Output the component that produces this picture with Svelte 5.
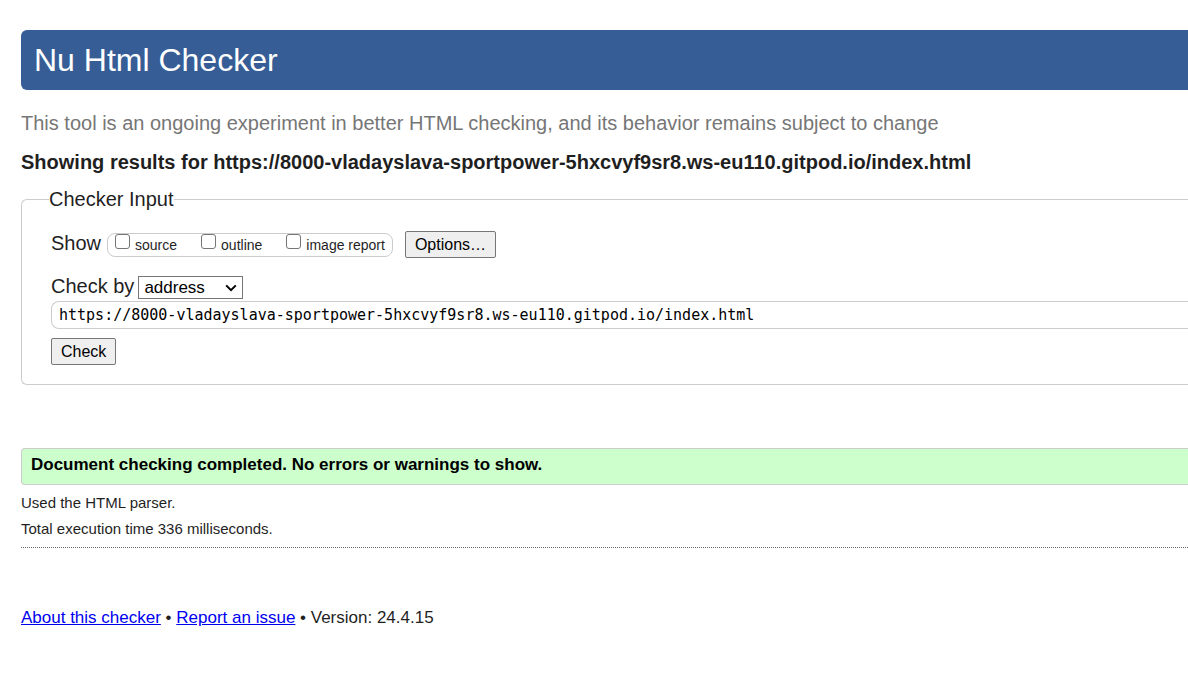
<script>
  const version = '24.4.15';
  let address = $state('https://8000-vladayslava-sportpower-5hxcvyf9sr8.ws-eu110.gitpod.io/index.html');
  const target = 'https://8000-vladayslava-sportpower-5hxcvyf9sr8.ws-eu110.gitpod.io/index.html';
  let method = $state('address');
  const reports = ['source', 'outline', 'image report'];
</script>

<div class="page">
  <header><h1>Nu Html Checker</h1></header>
  <main>
    <p class="intro">This tool is an ongoing experiment in better HTML checking, and its behavior remains subject to change</p>
    <h2>Showing results for {target}</h2>
    <form onsubmit={(e) => e.preventDefault()}>
      <fieldset>
        <legend>Checker Input</legend>
        <div class="show">
          <span class="caption">Show</span>
          <div class="reports">
            {#each reports as report}
              <label><input type="checkbox" /><span>{report}</span></label>
            {/each}
          </div>
          <button type="button">Options…</button>
        </div>
        <div class="method">
          <label for="method">Check by</label>
          <div class="picker">
            <select id="method" bind:value={method}>
              <option value="address">address</option>
              <option value="file">file upload</option>
              <option value="text">text input</option>
            </select>
            <svg viewBox="0 0 12 8" width="12" height="8" aria-hidden="true"><path d="M1.2 1.4 6 6.2l4.8-4.8" fill="none" stroke="#000" stroke-width="2" /></svg>
          </div>
        </div>
        <input class="address" type="text" aria-label="Address" spellcheck="false" bind:value={address} />
        <button type="submit">Check</button>
      </fieldset>
    </form>
    <p class="success">Document checking completed. No errors or warnings to show.</p>
    <div class="details">
      <p>Used the HTML parser.</p>
      <p>Total execution time 336 milliseconds.</p>
    </div>
  </main>
  <footer><a href="#about">About this checker</a> • <a href="#issue">Report an issue</a> • Version: {version}</footer>
</div>

<style>
  :global(body) {
    margin: 0;
    background: #fff;
  }
  .page {
    padding: 30px 0 48px 21px;
    font-family: Arial, 'Liberation Sans', sans-serif;
    font-size: 20px;
    line-height: 24px;
    color: #1f1f1f;
  }
  h1, h2, p {
    margin: 0;
  }
  header {
    padding: 10px 13px;
    border-radius: 6px 0 0 6px;
    background: #365d95;
    color: #fff;
  }
  h1 {
    font-size: 32px;
    line-height: 40px;
    font-weight: 400;
  }
  .intro {
    margin-top: 21px;
    color: #767676;
  }
  h2 {
    margin-top: 15px;
    font-size: 20px;
    font-weight: 700;
  }
  fieldset {
    min-width: 0;
    margin: 13px 0 0;
    padding: 20px 0 19px 29px;
    border: 1px solid #ccc;
    border-right: 0;
    border-radius: 6px 0 0 6px;
  }
  legend {
    margin-left: -2px;
    padding: 0;
  }
  button, select, input {
    box-sizing: border-box;
    margin: 0;
    font-family: inherit;
    color: #000;
  }
  button {
    display: block;
    height: 27px;
    padding: 0 9px;
    border: 1px solid #767676;
    border-radius: 2px;
    background: #efefef;
    font-size: 16px;
    line-height: 24px;
  }
  .show {
    display: flex;
    align-items: center;
  }
  .caption {
    padding-bottom: 3px;
  }
  .reports {
    display: flex;
    gap: 24px;
    margin: 0 12px 0 6px;
    padding: 0 7px;
    border: 1px solid #ccc;
    border-radius: 8px;
    font-size: 14px;
    line-height: 22px;
  }
  .reports label {
    display: flex;
    gap: 5px;
  }
  .reports input {
    width: 15px;
    height: 15px;
    appearance: none;
    border: 1px solid #767676;
    border-radius: 3px;
    background: #fff;
  }
  .reports input:checked {
    background: #0075ff;
  }
  .method {
    display: flex;
    gap: 4px;
    margin-top: 16px;
  }
  .picker {
    position: relative;
    display: flex;
    padding-top: 2px;
  }
  .picker svg {
    position: absolute;
    right: 6px;
    top: 10px;
    pointer-events: none;
  }
  select {
    width: 105px;
    height: 23px;
    padding: 0 5px;
    appearance: none;
    border: 1px solid #767676;
    border-radius: 0;
    background: #fff;
    font-size: 17px;
  }
  .address {
    display: block;
    width: 100%;
    height: 28px;
    margin: 2px 0 9px;
    padding: 0 7px;
    border: 1px solid #ccc;
    border-right: 0;
    border-radius: 8px 0 0 8px;
    font-family: Consolas, 'DejaVu Sans Mono', monospace;
    font-size: 15px;
  }
  .success {
    margin-top: 63px;
    padding: 4px 9px 7px;
    border: 1px solid #ccc;
    border-right: 0;
    border-radius: 4px 0 0 4px;
    background: #cfc;
    color: #000;
    font-size: 17px;
    font-weight: 700;
  }
  .details {
    padding: 5px 0;
    border-bottom: 1px dotted #666;
    font-size: 15px;
    line-height: 26px;
  }
  footer {
    margin-top: 58px;
    font-size: 17px;
  }
  a {
    color: #00e;
  }
</style>
